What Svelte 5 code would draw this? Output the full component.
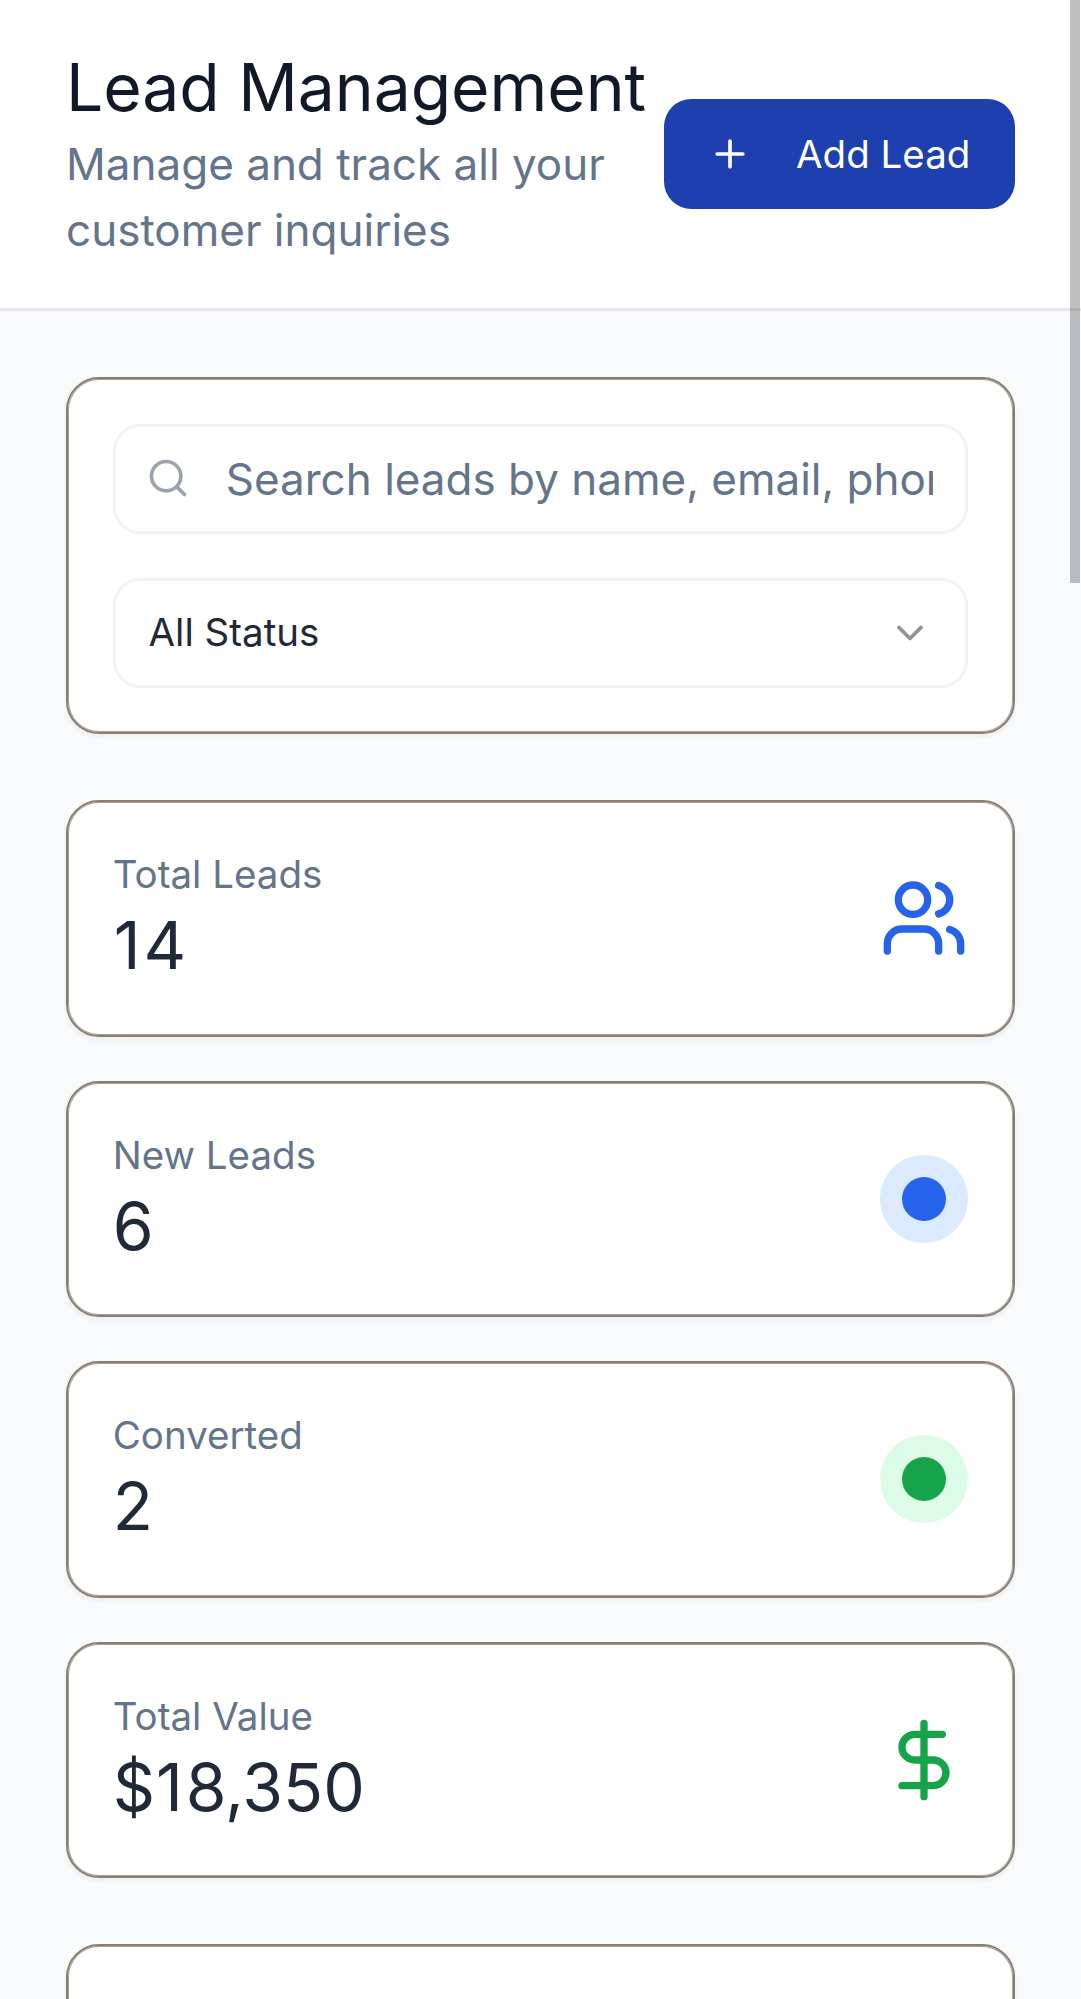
<script>
  const stats = [
    { label: 'Total Leads', value: '14', kind: 'users' },
    { label: 'New Leads', value: '6', kind: 'dot', tone: 'blue' },
    { label: 'Converted', value: '2', kind: 'dot', tone: 'green' },
    { label: 'Total Value', value: '$18,350', kind: 'dollar' }
  ];

  // The figure 1 is set slightly wider than the other digits' default fit.
  const runs = (value) => value.split(/(1)/).filter(Boolean);
</script>

<div class="page">
  <header class="header">
    <div>
      <h1>Lead Management</h1>
      <p class="subtitle">Manage and track all your customer inquiries</p>
    </div>
    <button class="add">
      <svg class="icon" viewBox="0 0 24 24"><path d="M5 12h14M12 5v14" /></svg>
      <span>Add Lead</span>
    </button>
  </header>

  <main>
    <section class="card filters">
      <div class="field">
        <svg class="icon search" viewBox="0 0 24 24"><circle cx="11" cy="11" r="8" /><path d="m21 21-4.3-4.3" /></svg>
        <input type="text" placeholder="Search leads by name, email, phone..." />
      </div>
      <div class="field select">
        <span>All Status</span>
        <svg class="icon chevron" viewBox="0 0 24 24"><path d="m6 9 6 6 6-6" /></svg>
      </div>
    </section>

    <section class="stats">
      {#each stats as stat}
        <article class="card stat">
          <div>
            <p class="label">{stat.label}</p>
            <p class="value">{#each runs(stat.value) as run}<span class:one={run === '1'}>{run}</span>{/each}</p>
          </div>
          {#if stat.kind === 'users'}
            <svg class="icon large users" viewBox="0 0 24 24">
              <path d="M16 21v-2a4 4 0 0 0-4-4H6a4 4 0 0 0-4 4v2" />
              <circle cx="9" cy="7" r="4" />
              <path d="M22 21v-2a4 4 0 0 0-3-3.87" />
              <path d="M16 3.13a4 4 0 0 1 0 7.75" />
            </svg>
          {:else if stat.kind === 'dollar'}
            <svg class="icon large dollar" viewBox="0 0 24 24">
              <path d="M12 2v20" />
              <path d="M17 5H9.5a3.5 3.5 0 0 0 0 7h5a3.5 3.5 0 0 1 0 7H6" />
            </svg>
          {:else}
            <div class="badge {stat.tone}"><div class="dot"></div></div>
          {/if}
        </article>
      {/each}
    </section>

    <section class="card list"></section>
  </main>
  <div class="scrollbar"></div>
</div>

<style>
  :global(html) { font-size: 44px; }
  :global(body) { overflow: hidden; }
  .page {
    position: relative;
    box-sizing: border-box;
    height: 1999px;
    overflow: hidden;
    background: #f9fafc;
    color: #1f2937;
    font-family: Inter, sans-serif;
    font-size: 1rem;
    line-height: 1.5;
  }
  h1, p { margin: 0; font-weight: 400; }
  .header {
    display: flex;
    align-items: center;
    justify-content: space-between;
    padding: 43px 1.5rem 45px;
    background: #fff;
    border-bottom: 3px solid #e5e7eb;
  }
  h1 {
    font-size: 1.5rem;
    line-height: 2rem;
    letter-spacing: -0.06px;
    color: #111827;
    white-space: nowrap;
  }
  .subtitle { color: #64748b; }
  .add {
    display: flex;
    flex: none;
    align-items: center;
    gap: 1rem;
    width: 351px;
    height: 2.5rem;
    margin-top: 2px;
    padding: 0 1rem;
    border: 0;
    border-radius: 0.625rem;
    background: #1e40af;
    color: #fff;
    font: 400 0.875rem/1.25rem Inter, sans-serif;
    white-space: nowrap;
  }
  .icon {
    flex: none;
    width: 1rem;
    height: 1rem;
    fill: none;
    stroke: currentColor;
    stroke-width: 2;
    stroke-linecap: round;
    stroke-linejoin: round;
  }
  .large { width: 2rem; height: 2rem; margin-bottom: 0.5px; }
  main { padding: 65.75px 1.5rem 0; }
  .card {
    box-sizing: border-box;
    border: 2px solid #8b7e70;
    border-radius: 0.75rem;
    background: #fff;
    box-shadow:
      inset 0 0 0 1px rgba(139, 126, 112, 0.75),
      0 2.75px 5.5px rgba(0, 0, 0, 0.05);
  }
  .filters {
    display: flex;
    flex-direction: column;
    gap: 1rem;
    padding: 44.75px;
  }
  .field {
    box-sizing: border-box;
    display: flex;
    align-items: center;
    height: 2.5rem;
    padding: 0 33.75px;
    border: 2px solid #f1f1f1;
    border-radius: 0.625rem;
    box-shadow: inset 0 0 0 1px rgba(241, 241, 241, 0.75);
  }
  .search { color: #9ca3af; margin: 0 36px 1px -2.75px; }
  input {
    flex: 1;
    min-width: 0;
    padding: 0;
    border: 0;
    outline: 0;
    background: transparent;
    font: 400 1rem/1.5 Inter, sans-serif;
  }
  input::placeholder { color: #64748b; opacity: 1; }
  .select { justify-content: space-between; font-size: 0.875rem; line-height: 1.25rem; }
  .chevron { margin-right: 0.75px; opacity: 0.5; }
  .stats { display: grid; gap: 1rem; margin: 1.5rem 0; }
  .stat {
    display: flex;
    align-items: center;
    justify-content: space-between;
    height: 236.5px;
    padding: 0 44.75px;
  }
  .label { font-size: 0.875rem; line-height: 1.25rem; color: #64748b; }
  .value {
    margin: -1px 0 1px;
    font-size: 1.5rem;
    line-height: 2rem;
  }
  .one { margin: 0 2.8px 0 1px; }
  .users { color: #2563eb; }
  .dollar { color: #16a34a; }
  .badge {
    display: grid;
    place-items: center;
    width: 2rem;
    height: 2rem;
    margin-bottom: 0.5px;
    border-radius: 50%;
  }
  .dot { width: 1rem; height: 1rem; border-radius: 50%; }
  .blue { background: #dbeafe; }
  .blue .dot { background: #2563eb; }
  .green { background: #dcfce7; }
  .green .dot { background: #16a34a; }
  .list { height: 236.5px; }
  .scrollbar {
    position: absolute;
    top: 0;
    right: 1px;
    width: 10px;
    height: 583px;
    background: rgba(0, 0, 0, 0.25);
  }
</style>
